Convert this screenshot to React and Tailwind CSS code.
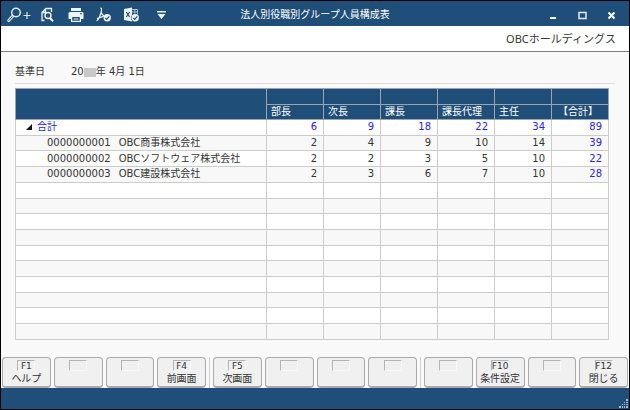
const columns = ['部長', '次長', '課長', '課長代理', '主任', '【合計】']

const companies = [
    { code: '0000000001', name: 'OBC商事株式会社', values: [2, 4, 9, 10, 14, 39] },
    { code: '0000000002', name: 'OBCソフトウェア株式会社', values: [2, 2, 3, 5, 10, 22] },
    { code: '0000000003', name: 'OBC建設株式会社', values: [2, 3, 6, 7, 10, 28] },
]

const totals = [6, 9, 18, 22, 34, 89]

const keyGroups = [
    [{ key: 'F1', label: 'ヘルプ' }, {}, {}, { key: 'F4', label: '前画面' }],
    [{ key: 'F5', label: '次画面' }, {}, {}, {}],
    [{}, { key: 'F10', label: '条件設定' }, {}, { key: 'F12', label: '閉じる' }],
]

function ZoomIcon() {
    return (
        <svg width="24" height="16" viewBox="0 0 24 16" fill="none" stroke="#dfe8f0">
            <circle cx="9" cy="5.500" r="4.300" strokeWidth="1.500" />
            <path d="M5.500 9.300 1.800 13.600" strokeWidth="3" strokeLinecap="round" />
            <path d="M5.200 9.700 2 13.400" stroke="#1f4e79" strokeWidth="1" strokeLinecap="round" />
            <path d="M16.500 8.500h7M20 5v7" strokeWidth="1.200" />
        </svg>
    )
}

function PreviewIcon() {
    return (
        <svg width="13" height="16" viewBox="0 0 13 16" fill="none" stroke="#eef3f8">
            <path d="M3.500 13.500H1V5.500L5 1.500h5.500V5M1 5.500h3.500v-3.500" strokeWidth="1.300" />
            <circle cx="7" cy="8.500" r="3" strokeWidth="1.400" />
            <path d="m9 11 3 3.200" strokeWidth="2" />
        </svg>
    )
}

function PrinterIcon() {
    return (
        <svg width="16" height="16" viewBox="0 0 16 16">
            <path fill="#eef3f8" d="M3 1h10v3H3zM1.500 5h13l1 1v6H13V9.500H3V12H.5V6z" />
            <path fill="none" stroke="#eef3f8" strokeWidth="1.200" d="M3.600 9.500h8.800v4.900H3.600z" />
            <path stroke="#eef3f8" d="M5.500 12h5" />
            <path stroke="#1f4e79" d="M12 6.800h2" />
        </svg>
    )
}

function PdfIcon() {
    return (
        <svg width="16" height="16" viewBox="0 0 16 16" fill="none">
            <path d="M4.700 1c1.300 0 .8 3.400 0 5.700C3.900 9.200 2.400 12.700 1 13.500M5 5c.6 2 2 3.500 3.500 4.300M1.500 11.500c2-.8 3.500-1.500 5.500-1.800" stroke="#eef3f8" strokeWidth="1.200" strokeLinecap="round" />
            <circle cx="11.200" cy="10.700" r="3.700" fill="#eef3f8" />
            <path d="m9.200 10.800 1.500 1.500 2.600-3" stroke="#1f4e79" strokeWidth="1.200" />
        </svg>
    )
}

function ExcelIcon() {
    return (
        <svg width="16" height="16" viewBox="0 0 16 16" fill="none">
            <path d="M0 2 8 .5v14L0 13z" fill="#eef3f8" />
            <path d="m2.300 5 3.400 5M5.700 5l-3.400 5" stroke="#1f4e79" strokeWidth="1.200" />
            <path d="M8 2.500h5.500V8M8 5h5.500M10.800 2.500V8" stroke="#a9bfd3" strokeWidth="1" />
            <circle cx="11.200" cy="10.700" r="4.300" fill="#1f4e79" />
            <circle cx="11.200" cy="10.700" r="3.700" fill="#eef3f8" />
            <path d="m9.200 10.800 1.500 1.500 2.600-3" stroke="#1f4e79" strokeWidth="1.200" />
        </svg>
    )
}

function MenuIcon() {
    return (
        <svg width="9" height="16" viewBox="0 0 9 16" fill="#eef3f8">
            <path d="M0 4h9v1.500H0zM.5 7h8l-4 5z" />
        </svg>
    )
}

function TitleBar() {
    return (
        <header className="grid h-[25px] grid-cols-[1fr_auto_1fr] items-center bg-[#1f4e79] px-1.5">
            <div className="flex items-center pt-0.5">
                <button aria-label="拡大" className="mr-2.5"><ZoomIcon /></button>
                <button aria-label="プレビュー" className="mr-3.5"><PreviewIcon /></button>
                <button aria-label="印刷" className="mr-3"><PrinterIcon /></button>
                <button aria-label="PDF" className="mr-3"><PdfIcon /></button>
                <button aria-label="Excel" className="mr-[17px]"><ExcelIcon /></button>
                <button aria-label="メニュー"><MenuIcon /></button>
            </div>
            <h1 className="pt-0.5 text-[10px] leading-4 text-white">法人別役職別グループ人員構成表</h1>
            <div className="flex items-center justify-end gap-5 pr-[7px] pt-1">
                <button aria-label="最小化">
                    <svg width="9" height="9" viewBox="0 0 9 9"><path d="M1 6h6v2H1z" fill="#fff" /></svg>
                </button>
                <button aria-label="最大化">
                    <svg width="9" height="9" viewBox="0 0 9 9"><path d="M1 1.500h7v6H1z" fill="none" stroke="#e4ebf2" strokeWidth="1.500" /></svg>
                </button>
                <button aria-label="閉じる">
                    <svg width="9" height="9" viewBox="0 0 9 9"><path d="m1.500 1.500 6 6m0-6-6 6" stroke="#fff" strokeWidth="2" /></svg>
                </button>
            </div>
        </header>
    )
}

function NumberCells({ values, total }) {
    return columns.map((column, i) => (
        <td
            key={column}
            className={`border border-[#cccccc] py-0 pl-0 pr-1.5 text-right ${total || i === columns.length - 1 ? 'text-[#2a20f0]' : ''}`}
        >
            {values ? values[i] : ''}
        </td>
    ))
}

function StaffTable() {
    return (
        <table className="h-[252px] w-full table-fixed border-collapse bg-white text-[10px] leading-[14px]">
            <colgroup>
                <col />
                {columns.map((column) => <col key={column} className="w-[57px]" />)}
            </colgroup>
            <thead className="bg-[#1f4e79] text-white">
                <tr className="h-4">
                    <td rowSpan={2} className="border border-[#9aa5b0] p-0" />
                    {columns.map((column) => <td key={column} className="border border-[#9aa5b0] p-0" />)}
                </tr>
                <tr className="h-[15px]">
                    {columns.map((column, i) => (
                        <th
                            key={column}
                            scope="col"
                            className={`whitespace-nowrap border border-[#9aa5b0] p-0 font-normal ${i === columns.length - 1 ? 'pr-1 text-center' : 'pl-1 text-left'}`}
                        >
                            {column}
                        </th>
                    ))}
                </tr>
            </thead>
            <tbody className="text-[#333333]">
                <tr className="h-[15px]">
                    <th scope="row" className="border border-[#cccccc] py-0 pl-2.5 pr-0 text-left font-normal text-[#2a20f0]">
                        <span className="flex items-center gap-[5px]">
                            <svg width="6" height="6" viewBox="0 0 6 6"><path d="M6 0v6H0z" fill="#111" /></svg>
                            合計
                        </span>
                    </th>
                    <NumberCells values={totals} total />
                </tr>
                {companies.map((company, i) => (
                    <tr key={company.code} className={`h-[15px] ${i % 2 === 0 ? 'bg-[#f8f8f8]' : ''}`}>
                        <th scope="row" className="border border-[#cccccc] py-0 pl-[31px] pr-0 text-left font-normal">
                            <span className="flex gap-2">
                                <span>{company.code}</span>
                                <span>{company.name}</span>
                            </span>
                        </th>
                        <NumberCells values={company.values} />
                    </tr>
                ))}
                {Array.from({ length: 10 }, (_, i) => (
                    <tr key={i} className={`h-[15px] ${i % 2 === 1 ? 'bg-[#f8f8f8]' : ''}`}>
                        <td className="border border-[#cccccc] p-0" />
                        <NumberCells />
                    </tr>
                ))}
            </tbody>
        </table>
    )
}

function FunctionKey({ item }) {
    return (
        <button className="flex h-[31px] min-w-0 flex-1 flex-col items-center rounded border border-b-2 border-[#aaaaaa] bg-[#f0f0f0] pt-0.5 text-[10px] text-[#333333]">
            <span className="flex h-[11px] w-[18px] items-center justify-center border border-b-[#f8f8f8] border-l-[#b4b4b4] border-r-[#f8f8f8] border-t-[#b4b4b4] text-[9px] leading-[10px]">
                {item.key}
            </span>
            <span className="mt-px whitespace-nowrap leading-[14px]">{item.label}</span>
        </button>
    )
}

export default function App() {
    return (
        <div className="flex min-h-screen flex-col border border-black bg-[#f9f9f9] font-['DejaVu_Sans','Noto_Sans_CJK_JP',sans-serif] text-[#333333]">
            <TitleBar />
            <div className="flex h-[26px] items-center justify-end border-b border-[#808080] bg-white pr-[13px] font-['Noto_Sans','Noto_Sans_CJK_JP',sans-serif] text-[11px] leading-4">
                OBCホールディングス
            </div>
            <main className="flex-1 pl-[14px] pr-[20px] pt-3">
                <div className="-mr-[6px] flex gap-[26px] border-b border-[#dddddd] pb-[3px] text-[10px] leading-4">
                    <span>基準日</span>
                    <span className="flex items-center">
                        20<span className="h-[9px] w-3 bg-[#c8c8c8]" />年&nbsp;4月&nbsp;1日
                    </span>
                </div>
                <div className="pt-1">
                    <StaffTable />
                </div>
            </main>
            <nav className="flex gap-[3px] px-px">
                {keyGroups.map((group, g) => (
                    <div key={g} className={`flex flex-1 gap-[3px] ${g > 0 ? 'border-l border-[#d0d0d0] pl-[3px]' : ''}`}>
                        {group.map((item, i) => <FunctionKey key={i} item={item} />)}
                    </div>
                ))}
            </nav>
            <footer className="flex h-[21px] items-end justify-end bg-[#1f4e79] p-px">
                <svg width="9" height="9" viewBox="0 0 9 9" fill="#a9bccd">
                    <path d="M7 0h2v2H7zM7 3h2v1H7zM5 3h1v1H5zM7 5h2v1H7zM5 5h1v1H5zM3 5h1v1H3zM7 7h2v2H7zM5 7h1v2H5zM3 7h1v2H3zM0 7h2v2H0z" />
                </svg>
            </footer>
        </div>
    )
}
